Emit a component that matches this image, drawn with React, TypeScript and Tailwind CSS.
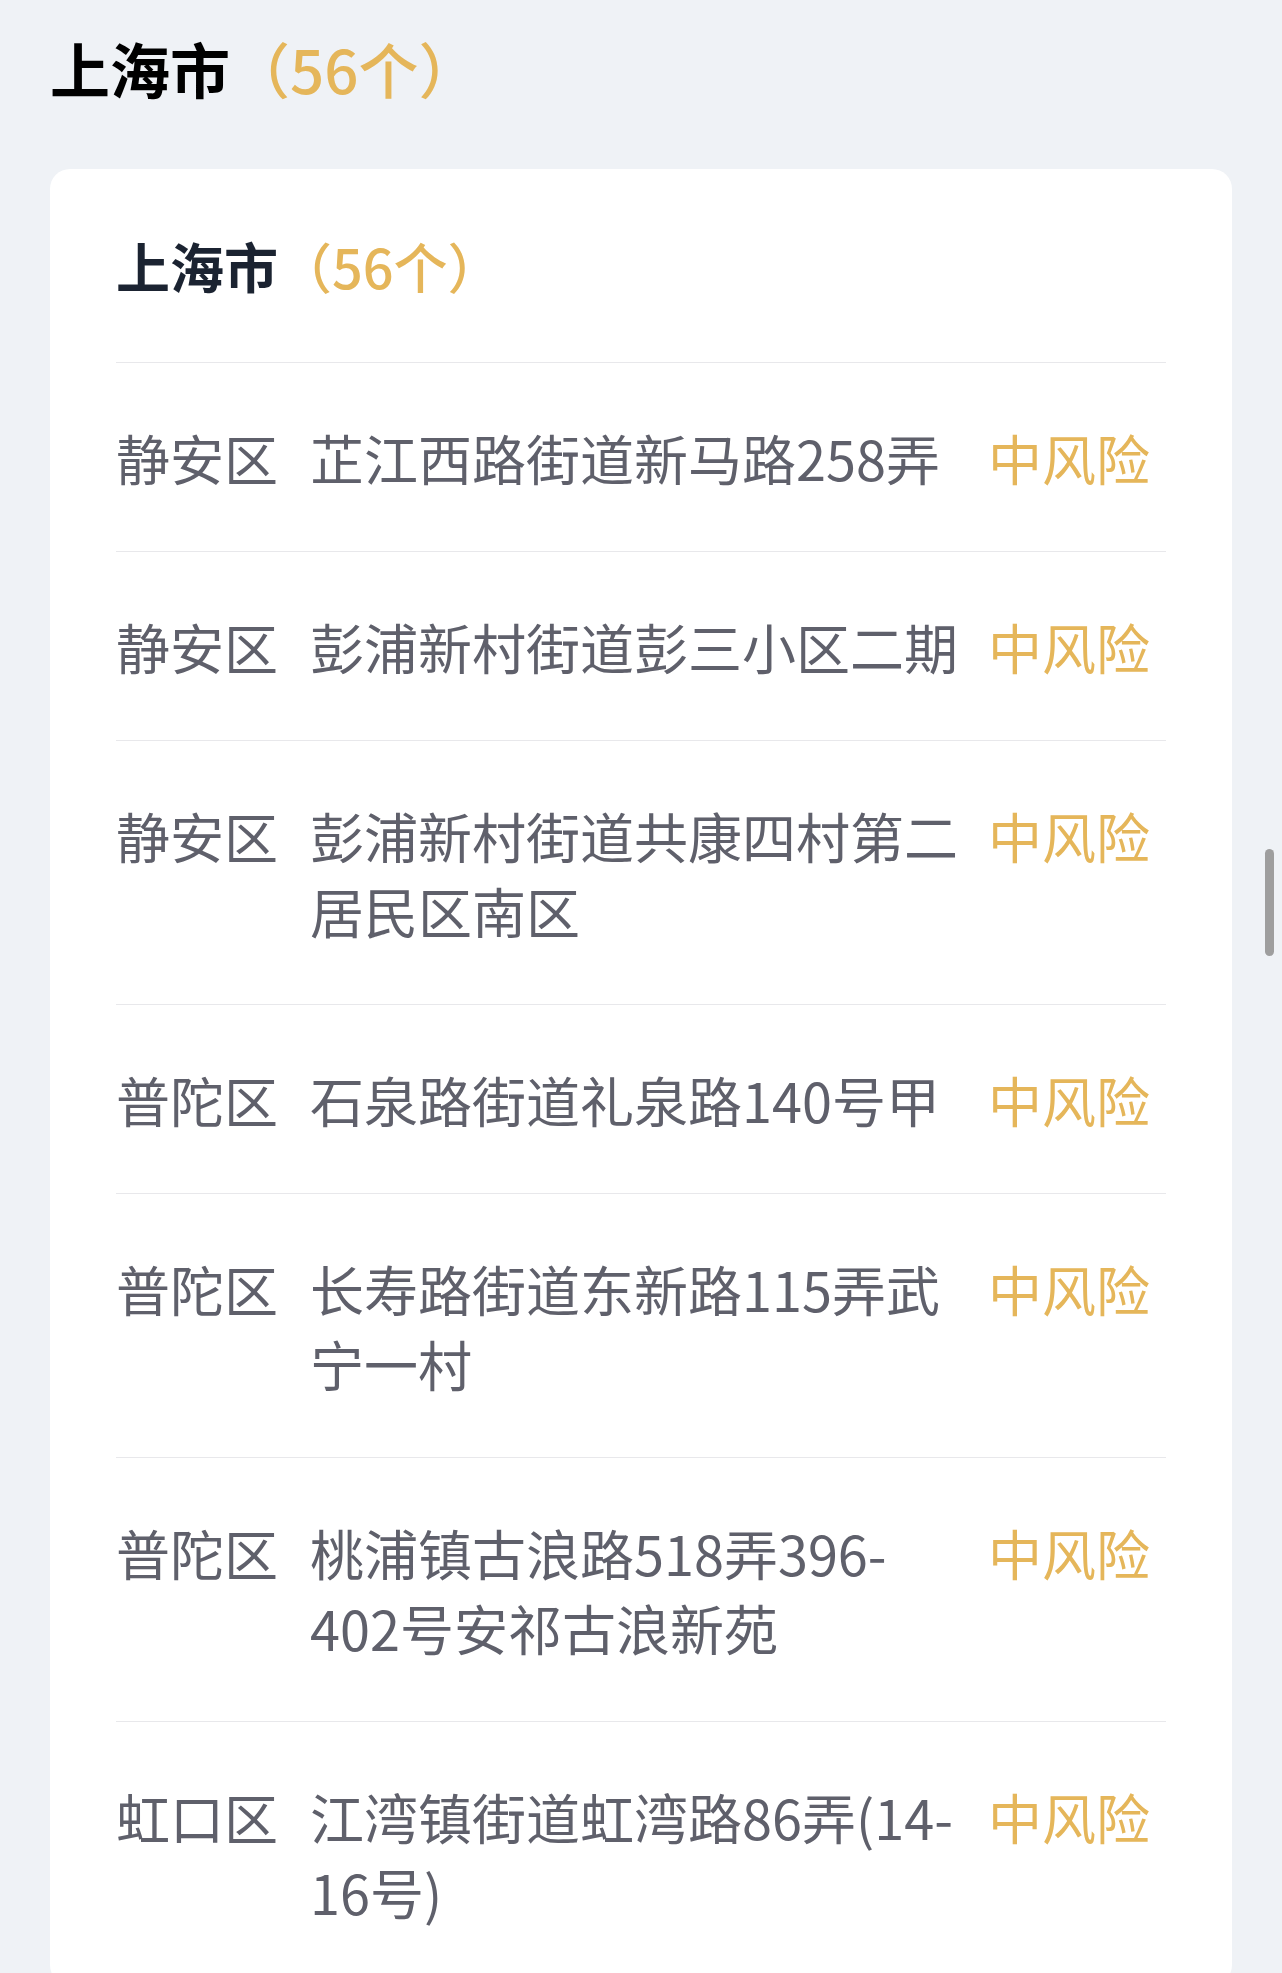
import React from 'react';

const areas = [
  { id: 1, district: '静安区', address: '芷江西路街道新马路258弄', level: '中风险' },
  { id: 2, district: '静安区', address: '彭浦新村街道彭三小区二期', level: '中风险' },
  { id: 3, district: '静安区', address: '彭浦新村街道共康四村第二居民区南区', level: '中风险' },
  { id: 4, district: '普陀区', address: '石泉路街道礼泉路140号甲', level: '中风险' },
  { id: 5, district: '普陀区', address: '长寿路街道东新路115弄武宁一村', level: '中风险' },
  { id: 6, district: '普陀区', address: '桃浦镇古浪路518弄396-402号安祁古浪新苑', level: '中风险' },
  { id: 7, district: '虹口区', address: '江湾镇街道虹湾路86弄(14-16号)', level: '中风险' },
];

const App = () => {
  return (
    <div className="relative h-[1973px] overflow-hidden bg-[#eff2f6] font-['Noto_Sans_CJK_SC','Noto_Sans',sans-serif]">
      <div className="px-[50px] pt-[28px]">
        <h1 className="text-[60px] font-bold leading-[80px] text-black">
          上海市
          <span className="font-medium text-[#e5b65a]">（56个）</span>
        </h1>

        <div className="mt-[61px] rounded-[20px] bg-white px-[66px]">
          <h2 className="py-[59px] text-[54px] font-bold leading-[75px] text-[#1b2331]">
            上海市
            <span className="font-medium text-[#e5b65a]">（56个）</span>
          </h2>

          {areas.map((area) => (
            <div
              key={area.id}
              className="flex border-t border-[#e8e8eb] pt-[57px] pb-[56px] text-[54px] leading-[75px]"
            >
              <div className="w-[162px] shrink-0 text-[#5f606b]">{area.district}</div>
              <div className="ml-[32px] w-[655px] shrink-0 text-[#5f606b]">{area.address}</div>
              <div className="ml-[23px] shrink-0 text-[#e5b65a]">{area.level}</div>
            </div>
          ))}
        </div>
      </div>

      {/* scroll indicator */}
      <div className="absolute left-[1265px] top-[849px] h-[107px] w-[9px] rounded-full bg-[#9e9e9e]" />
    </div>
  );
};

export default App;
